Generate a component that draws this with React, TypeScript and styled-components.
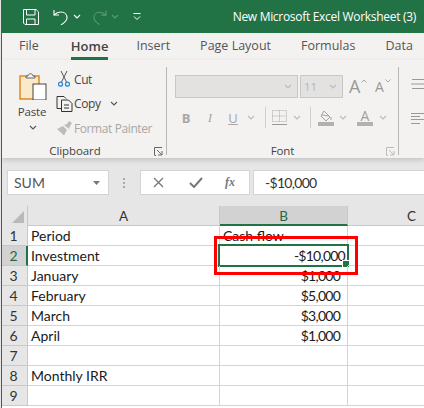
import React from "react";
import styled, { createGlobalStyle } from "styled-components";

const Global = createGlobalStyle`
  html, body { margin: 0; padding: 0; background: #e6e6e6; }
  * { box-sizing: border-box; }
`;

const UI = `"Open Sans", "Noto Sans", sans-serif`;
const CELL = `Lato, "Open Sans", sans-serif`;
const GREEN = "#217346";

const Frame = styled.div`
  width: 423px; height: 408px; margin-left: 1px; overflow: hidden; position: relative;
  display: flex; flex-direction: column;
  background: #f3f2f1;
  border-left: 1px solid ${GREEN};
  font-family: ${UI};
`;
const TitleBar = styled.div`
  height: 33px; flex: none; background: ${GREEN}; color: #fff;
  display: flex; align-items: center; padding-left: 21px;
`;
const Qat = styled.div`
  display: flex; align-items: center;
  margin-right: ${p => p.$mr ?? 0}px;
  svg { display: block; }
`;
const TitleText = styled.div`
  margin-left: auto; margin-right: 8px; font-size: 12px; white-space: nowrap; letter-spacing: -0.3px;
`;
const TabBar = styled.div`
  height: 27px; flex: none; display: flex; align-items: center; padding-left: 17px; gap: 30px;
`;
const Tab = styled.div`
  position: relative; font-size: ${p => p.$active ? 13 : 12.5}px; height: 27px; line-height: 26px; color: ${p => p.$active ? "#444" : "#555"};
  font-weight: ${p => p.$active ? 600 : 400}; white-space: nowrap;
  ${p => p.$active && `margin: 0 -2px 0 2px; &::after { content: ""; position: absolute; left: 0; right: 0; bottom: 0; height: 3px; background: ${GREEN}; }`}
`;
const Ribbon = styled.div`
  height: 98px; flex: none; display: flex; background: #f3f2f1;
  box-shadow: 0 2px 5px rgba(0,0,0,.16); position: relative; z-index: 1;
`;
const Group = styled.div`
  position: relative; flex: none; width: ${p => p.$w}px; height: 88px;
  border-right: ${p => p.$noBorder ? "none" : "1px solid #b8b7b6"};
  margin-top: 7px;
`;
const GroupInner = styled.div`
  display: flex; height: 76px; padding-left: ${p => p.$pl}px; padding-top: ${p => p.$pt ?? 0}px;
`;
const GroupLabel = styled.div`
  font-size: 11.5px; color: #444; text-align: center; height: 16px; line-height: 16px;
  padding-right: ${p => p.$pr ?? 0}px; letter-spacing: -0.1px;
`;
const Launcher = styled.svg`
  position: absolute; right: 3px; bottom: -1px; display: block;
`;
const PasteCol = styled.div`
  width: 34px; display: flex; flex-direction: column; align-items: center; margin-right: 4px; padding-top: 5px;
`;
const PasteLabel = styled.div`
  font-size: 11.5px; color: #444; line-height: 16px; margin: 4px 2px 0 0; letter-spacing: -0.2px;
`;
const ClipList = styled.div`
  display: flex; flex-direction: column;
`;
const ClipRow = styled.div`
  display: flex; align-items: center; height: 24.5px; font-size: 12px; letter-spacing: -0.4px; white-space: nowrap;
  color: ${p => p.$off ? "#a8a7a6" : "#444"};
  svg { flex: none; display: block; }
`;
const ClipIcon = styled.span`
  width: 20px; display: flex; justify-content: center; flex: none;
`;
const FontCol = styled.div`
  display: flex; flex-direction: column; gap: 8px;
`;
const FontRow = styled.div`
  display: flex; align-items: center; height: ${p => p.$h}px;
`;
const SelectBox = styled.div`
  width: ${p => p.$w}px; height: 23px; margin-right: 2px; background: #e3e2e1; border: 1px solid #c8c7c6;
  display: flex; align-items: center; justify-content: space-between; padding: 0 5px 0 3px;
  font-size: 11.5px; color: #b5b4b3;
`;
const GrowA = styled.span`
  font-family: ${UI}; color: #9a9998; font-size: ${p => p.$s}px; line-height: 23px; display: flex; align-items: flex-start;
  width: ${p => p.$w}px; margin-left: ${p => p.$ml ?? 0}px;
`;
const TinyMark = styled.svg`
  display: block; margin-top: 4px; margin-left: 1px; flex: none;
`;
const Fmt = styled.span`
  width: ${p => p.$w}px; flex: none; text-align: center; color: #a8a7a6; font-size: 13px; line-height: 16px;
  font-family: ${p => p.$serif ? `"Liberation Serif", serif` : UI};
  font-weight: ${p => p.$b ? 700 : 400}; font-style: ${p => p.$i ? "italic" : "normal"};
  text-decoration: ${p => p.$u ? "underline" : "none"};
`;
const Slot = styled.span`
  display: flex; justify-content: center; width: ${p => p.$w}px; flex: none; svg { display: block; }
`;
const VSep = styled.span`
  width: 1px; height: 21px; background: #d0cfce; margin: 0 ${p => p.$r}px 0 ${p => p.$l}px; flex: none;
`;
const ColorA = styled.span`
  display: flex; flex-direction: column; align-items: center; width: 16px; flex: none;
  font-size: 14px; line-height: 13px; color: #a09f9e;
`;
const ColorBar = styled.span`
  display: block; width: 16px; height: 4px; background: #b3b0ad;
`;
const AlignCol = styled.div`
  display: flex; flex-direction: column; gap: 22px; padding: 11px 0 0 12px;
`;
const FormulaBar = styled.div`
  height: 48px; flex: none; background: #e6e6e6; display: flex; align-items: flex-start; padding: 12px 0 0 5px;
`;
const NameBox = styled.div`
  width: 102px; height: 25px; background: #fff; border: 1px solid #d4d4d4; display: flex; align-items: center;
  justify-content: space-between; padding: 0 8px 0 6px; font-family: ${CELL}; font-size: 14px; color: #555; margin-right: 14px;
`;
const Grip = styled.svg`
  display: block; margin: 8px 14px 0 0; flex: none;
`;
const FxBox = styled.div`
  width: 110px; height: 25px; background: #fff; border: 1px solid #d4d4d4; margin-right: 3px;
  display: flex; align-items: center; flex: none; padding-left: 12px;
`;
const FxSlot = styled.span`
  width: 36px; flex: none; display: flex; justify-content: flex-start; svg { display: block; }
`;
const Fx = styled.span`
  font-family: "Liberation Serif", serif; font-style: italic; font-weight: 700; font-size: 12px; color: #777;
`;
const FormulaInput = styled.div`
  flex: 1; height: 25px; background: #fff; border: 1px solid #d4d4d4; border-right: none; font-family: ${CELL}; font-size: 14px;
  line-height: 23px; color: #333; padding-left: 11px; letter-spacing: -0.7px;
`;
const Sheet = styled.div`
  flex: 1; background: #fff; display: grid; position: relative;
  grid-template-columns: 26px 192px 128px 128px; grid-auto-rows: 20px;
  font-family: ${CELL}; font-size: 14px; color: #1a1a1a;
`;
const Corner = styled.div`
  background: #e6e6e6; border-right: 1px solid #c8c8c8; display: flex; align-items: flex-end; justify-content: flex-end; padding: 0 3px 3px 0;
`;
const ColHead = styled.div`
  background: ${p => p.$sel ? "#d2d2d2" : "#e6e6e6"}; text-align: center; line-height: 20px; font-size: 13.5px;
  color: ${p => p.$sel ? "#1e6b42" : "#333"};
  border-right: 1px solid ${p => p.$last ? "transparent" : "#c8c8c8"};
  border-bottom: ${p => p.$sel ? `2px solid ${GREEN}` : "1px solid #c8c8c8"};
`;
const RowHead = styled.div`
  background: ${p => p.$sel ? "#d2d2d2" : "#e6e6e6"}; text-align: center; line-height: 20px; font-size: 14px;
  color: ${p => p.$sel ? "#1e6b42" : "#333"};
  border-right: ${p => p.$sel ? `2px solid ${GREEN}` : "1px solid #c8c8c8"};
  border-bottom: 1px solid #c8c8c8;
  padding-right: ${p => p.$sel ? 1 : 2}px;
`;
const Cell = styled.div`
  position: relative; white-space: nowrap;
  border-right: 1px solid #d4d4d4; border-bottom: 1px solid #d4d4d4;
  line-height: 20px; padding: 0 3px;
  text-align: ${p => p.$right ? "right" : "left"};
  letter-spacing: ${p => p.$right ? "-0.75px" : "0"};
  padding-right: ${p => p.$active ? 2 : p.$right ? 7 : 3}px;
`;
const Selection = styled.div`
  position: absolute; inset: -2px; border: 2px solid ${GREEN}; pointer-events: none;
  &::after { content: ""; position: absolute; right: -2px; bottom: -2px; width: 6px; height: 6px; background: ${GREEN}; border: 1px solid #fff; border-right: none; border-bottom: none; }
`;
const Callout = styled.div`
  position: absolute; left: -6px; top: 10px; width: 144px; height: 39px; border: 3px solid #fe0000; pointer-events: none;
  z-index: 2;
`;

const Chev = ({ c = "#fff", x = 0 }: { c?: string; x?: number }) => (
  <svg width="8" height="5" viewBox="0 0 8 5" style={x ? { marginLeft: x } : undefined}>
    <path d="M1 1l3 3 3-3" fill="none" stroke={c} strokeWidth="1.1" />
  </svg>
);
const Lines = () => (
  <svg width="13" height="12" viewBox="0 0 13 12">
    <path d="M1 1.5h12M0 6h13M1 10.5h12" stroke="#999" fill="none" />
  </svg>
);
const LeftLines = () => (
  <svg width="13" height="13" viewBox="0 0 13 13">
    <path d="M0 1.5h13M0 4.5h9M0 7.5h13M0 11.5h9" stroke="#999" fill="none" />
  </svg>
);
const LaunchIcon = ({ c }: { c: string }) => (
  <Launcher width="9" height="9" viewBox="0 0 9 9">
    <path d="M.5 8V.5H8M3 3l4.500 4.500M4 8h4V4M.5 8.500H2" fill="none" stroke={c} />
  </Launcher>
);

const rows: [string, string, boolean?][] = [
  ["Period", "Cash flow"],
  ["Investment", "-$10,000", true],
  ["January", "$1,000", true],
  ["February", "$5,000", true],
  ["March", "$3,000", true],
  ["April", "$1,000", true],
  ["", ""],
  ["Monthly IRR", ""],
  ["", ""],
];

export default function App() {
  return (
    <Frame>
      <Global />
      <TitleBar>
        <Qat $mr={14}>
          <svg width="16" height="16" viewBox="0 0 16 16" fill="none" stroke="#fff">
            <path d="M.5.5h12.600l2.400 2.400v12.600H2L.5 14z" />
            <path d="M3.500.5v5.500h8.500V.5M3.500 15.500V10h8.500v5.500" />
          </svg>
        </Qat>
        <Qat $mr={11}>
          <svg width="16" height="16" viewBox="0 0 16 16" fill="none" stroke="#fff" strokeWidth="1.1">
            <path d="M1 1v5h5" />
            <path d="M1 6c2-2 4-3 7-3 4 0 6 3 6 6 0 2-1.500 4-6 7" />
          </svg>
          <span style={{ width: 4 }} />
          <Chev />
        </Qat>
        <Qat $mr={14}>
          <svg width="15" height="16" viewBox="0 0 16 16" fill="none" stroke="#5d9a78" strokeWidth="1.1">
            <path d="M15 1v5h-5" />
            <path d="M15 6c-2-2-4-3-7-3-4 0-6 3-6 6 0 2 1.500 4 6 7" />
          </svg>
          <span style={{ width: 4 }} />
          <Chev c="#5d9a78" />
        </Qat>
        <Qat>
          <svg width="8" height="9" viewBox="0 0 8 9" fill="none" stroke="#fff">
            <path d="M.5 1.500h7M1 4.500l3 3 3-3" />
          </svg>
        </Qat>
        <TitleText>New Microsoft Excel Worksheet (3)</TitleText>
      </TitleBar>
      <TabBar>
        <Tab>File</Tab>
        <Tab $active>Home</Tab>
        <Tab>Insert</Tab>
        <Tab>Page Layout</Tab>
        <Tab>Formulas</Tab>
        <Tab>Data</Tab>
      </TabBar>
      <Ribbon>
        <Group $w={165}>
          <GroupInner $pl={14}>
            <PasteCol>
              <svg width="28" height="28" viewBox="0 0 28 28">
                <rect x="1" y="4" width="19" height="23" fill="#fbe9cc" stroke="#e08a1e" strokeWidth="1.500" />
                <path d="M7 6V4h2c0-3 5-3 5 0h2v2z" fill="#f3f2f1" stroke="#666" />
                <rect x="14" y="12" width="13" height="16" fill="#fff" stroke="#444" />
              </svg>
              <PasteLabel>Paste</PasteLabel>
              <span style={{ height: 5 }} />
              <Chev c="#555" />
            </PasteCol>
            <ClipList>
              <ClipRow>
                <ClipIcon>
                  <svg width="12" height="16" viewBox="0 0 12 16" fill="none">
                    <path d="M3 0l5.500 11M9 0L3.500 11" stroke="#555" />
                    <circle cx="2.500" cy="13.200" r="2" stroke="#2b88d8" strokeWidth="1.300" />
                    <circle cx="9.500" cy="13.200" r="2" stroke="#2b88d8" strokeWidth="1.300" />
                  </svg>
                </ClipIcon>
                Cut
              </ClipRow>
              <ClipRow>
                <ClipIcon>
                  <svg width="17" height="16" viewBox="0 0 17 16" fill="none" stroke="#333">
                    <path d="M5 12.500H1V.5h7l2 2" />
                    <path d="M5.500 4h7l3.500 3.500v8h-10.500zM8 9h5M8 12h5" />
                  </svg>
                </ClipIcon>
                Copy
                <Chev c="#555" x={9} />
              </ClipRow>
              <ClipRow $off>
                <ClipIcon>
                  <svg width="17" height="16" viewBox="0 0 17 16" fill="#bdbcbb">
                    <path d="M1 9l6-3 4 4-3 5.500zM8 5l3-1 2-3 3 2-2 3-1 3z" />
                  </svg>
                </ClipIcon>
                Format Painter
              </ClipRow>
            </ClipList>
          </GroupInner>
          <GroupLabel $pr={18}>Clipboard</GroupLabel>
          <LaunchIcon c="#666" />
        </Group>
        <Group $w={232}>
          <GroupInner $pl={8} $pt={8}>
            <FontCol>
              <FontRow $h={23}>
                <SelectBox $w={123}><span /><Chev c="#bbb" /></SelectBox>
                <SelectBox $w={43}>11<Chev c="#bbb" /></SelectBox>
                <GrowA $s={18} $w={26} $ml={4}>A<TinyMark width="6" height="4" viewBox="0 0 6 4"><path d="M.5 3.500L3 1l2.500 2.500" fill="none" stroke="#aaa" /></TinyMark></GrowA>
                <GrowA $s={14} $w={18}>A<TinyMark width="6" height="4" viewBox="0 0 6 4"><path d="M.5.5L3 3 5.500.5" fill="none" stroke="#aaa" /></TinyMark></GrowA>
              </FontRow>
              <FontRow $h={23}>
                <Fmt $w={22} $b>B</Fmt>
                <Fmt $w={26} $i $serif>I</Fmt>
                <Fmt $w={20} $u>U</Fmt>
                <Slot $w={16}><Chev c="#bbb" /></Slot>
                <VSep $l={6} $r={6} />
                <Slot $w={15}>
                  <svg width="15" height="15" viewBox="0 0 15 15" fill="none">
                    <path d="M.5.5h14v11H.5zM7.500.5v11M.5 6h14" stroke="#aaa" strokeDasharray="1 1" />
                    <path d="M0 14.500h15" stroke="#999" />
                  </svg>
                </Slot>
                <Slot $w={20}><Chev c="#bbb" /></Slot>
                <VSep $l={3} $r={7} />
                <Slot $w={16}>
                  <ColorA>
                    <svg width="14" height="12" viewBox="0 0 14 12" fill="none" stroke="#a5a4a3">
                      <path d="M5 1l6 6-4 4-5-5zM3 5l7 1M12 7v3" />
                    </svg>
                    <ColorBar />
                  </ColorA>
                </Slot>
                <Slot $w={18}><Chev c="#bbb" /></Slot>
                <Slot $w={26}>
                  <ColorA>A<ColorBar /></ColorA>
                </Slot>
                <Slot $w={10}><Chev c="#bbb" /></Slot>
              </FontRow>
            </FontCol>
          </GroupInner>
          <GroupLabel>Font</GroupLabel>
          <LaunchIcon c="#bbb" />
        </Group>
        <Group $w={30} $noBorder>
          <AlignCol>
            <Lines />
            <LeftLines />
          </AlignCol>
        </Group>
      </Ribbon>
      <FormulaBar>
        <NameBox>
          SUM
          <svg width="7" height="4" viewBox="0 0 7 4"><path d="M0 0h7L3.500 4z" fill="#777" /></svg>
        </NameBox>
        <Grip width="3" height="10" viewBox="0 0 3 10"><path d="M0 0h2v2H0zM0 4h2v2H0zM0 8h2v2H0z" fill="#aaa" /></Grip>
        <FxBox>
          <FxSlot>
            <svg width="11" height="11" viewBox="0 0 11 11"><path d="M1 1l9 9M10 1l-9 9" stroke="#777" strokeWidth="1.300" /></svg>
          </FxSlot>
          <FxSlot>
            <svg width="14" height="11" viewBox="0 0 14 11"><path d="M1 6l4 4 8-9" fill="none" stroke="#777" strokeWidth="2" /></svg>
          </FxSlot>
          <Fx>fx</Fx>
        </FxBox>
        <FormulaInput>-$10,000</FormulaInput>
      </FormulaBar>
      <Sheet>
        <Corner>
          <svg width="12" height="12" viewBox="0 0 12 12"><path d="M12 0v12H0z" fill="#b9b9b9" /></svg>
        </Corner>
        <ColHead>A</ColHead>
        <ColHead $sel>B</ColHead>
        <ColHead $last>C</ColHead>
        {rows.map(([a, b, right], i) => (
          <React.Fragment key={i}>
            <RowHead $sel={i === 1}>{i + 1}</RowHead>
            <Cell>{a}</Cell>
            <Cell $right={right} $active={i === 1}>
              {b}
              {i === 1 && <Selection />}
              {i === 0 && <Callout />}
            </Cell>
            <Cell />
          </React.Fragment>
        ))}
      </Sheet>
    </Frame>
  );
}
